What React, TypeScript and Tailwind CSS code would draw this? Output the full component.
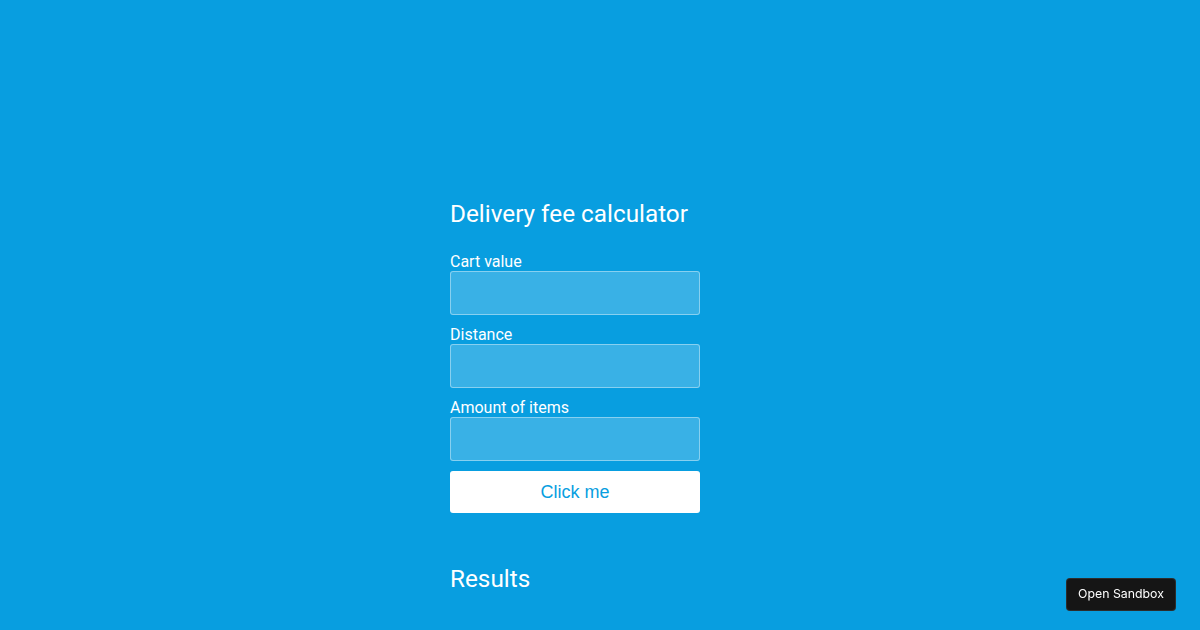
import { useState } from 'react'

const FIELDS = ['Cart value', 'Distance', 'Amount of items']

export default function App() {
  const [values, setValues] = useState<Record<string, string>>({})

  return (
    <div className="min-h-screen w-full bg-[#089ee0] text-white font-['Roboto',sans-serif]">
      <div className="flex justify-center pt-[200px]">
        <div className="w-[300px]">
          <h1 className="text-[24.3px] leading-[28px] font-normal">Delivery fee calculator</h1>

          <div className="mt-[24px] flex flex-col gap-[10px] w-[250px]">
            {FIELDS.map((label) => (
              <label key={label} className="flex flex-col">
                <span className="text-[16px] leading-[19px]">{label}</span>
                <input
                  className="h-[44px] w-full rounded-[3px] border border-white/40 bg-white/20 px-2 text-white outline-none"
                  value={values[label] ?? ''}
                  onChange={(e) => setValues({ ...values, [label]: e.target.value })}
                />
              </label>
            ))}
            <button className="h-[42px] w-full rounded-[3px] bg-white text-[18px] text-[#089ee0] font-['Liberation_Sans',Arial,sans-serif]">
              Click me
            </button>
          </div>

          <h2 className="mt-[52px] text-[24.3px] leading-[28px] font-normal">Results</h2>
        </div>
      </div>

      {/* Sandbox link */}
      <div className="fixed right-[24px] bottom-[19px]">
        <div className="h-[33px] w-[110px] rounded-[4px] bg-[#151515] border border-white/10 flex items-center justify-center text-[12.3px] text-white font-['Inter',sans-serif]">
          Open Sandbox
        </div>
      </div>
    </div>
  )
}
